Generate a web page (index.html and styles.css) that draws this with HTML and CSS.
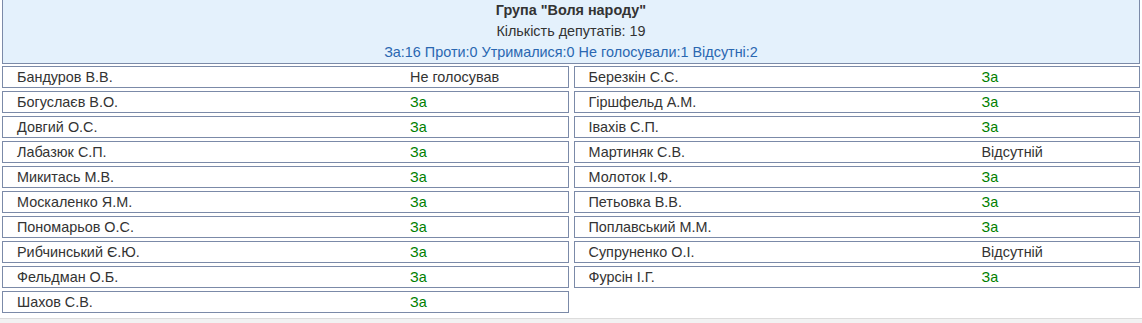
FILE: index.html
```html
<!DOCTYPE html>
<html lang="uk">
<head>
<meta charset="utf-8">
<title>Група "Воля народу"</title>
<link rel="stylesheet" href="styles.css">
</head>
<body>
<div class="page">
  <div class="group-head">
    <div class="title">Група "Воля народу"</div>
    <div class="count">Кількість депутатів: 19</div>
    <div class="summary">За:16 Проти:0 Утрималися:0 Не голосували:1 Відсутні:2</div>
  </div>
  <div class="grid">
    <div class="cell"><span class="name">Бандуров В.В.</span><span class="vote">Не голосував</span></div>
    <div class="cell"><span class="name">Березкін С.С.</span><span class="vote yes">За</span></div>
    <div class="cell"><span class="name">Богуслаєв В.О.</span><span class="vote yes">За</span></div>
    <div class="cell"><span class="name">Гіршфельд А.М.</span><span class="vote yes">За</span></div>
    <div class="cell"><span class="name">Довгий О.С.</span><span class="vote yes">За</span></div>
    <div class="cell"><span class="name">Івахів С.П.</span><span class="vote yes">За</span></div>
    <div class="cell"><span class="name">Лабазюк С.П.</span><span class="vote yes">За</span></div>
    <div class="cell"><span class="name">Мартиняк С.В.</span><span class="vote">Відсутній</span></div>
    <div class="cell"><span class="name">Микитась М.В.</span><span class="vote yes">За</span></div>
    <div class="cell"><span class="name">Молоток І.Ф.</span><span class="vote yes">За</span></div>
    <div class="cell"><span class="name">Москаленко Я.М.</span><span class="vote yes">За</span></div>
    <div class="cell"><span class="name">Петьовка В.В.</span><span class="vote yes">За</span></div>
    <div class="cell"><span class="name">Пономарьов О.С.</span><span class="vote yes">За</span></div>
    <div class="cell"><span class="name">Поплавський М.М.</span><span class="vote yes">За</span></div>
    <div class="cell"><span class="name">Рибчинський Є.Ю.</span><span class="vote yes">За</span></div>
    <div class="cell"><span class="name">Супруненко О.І.</span><span class="vote">Відсутній</span></div>
    <div class="cell"><span class="name">Фельдман О.Б.</span><span class="vote yes">За</span></div>
    <div class="cell"><span class="name">Фурсін І.Г.</span><span class="vote yes">За</span></div>
    <div class="cell"><span class="name">Шахов С.В.</span><span class="vote yes">За</span></div>
  </div>
  <div class="foot"></div>
</div>
</body>
</html>
```
FILE: styles.css
```css
html, body {
  margin: 0;
  padding: 0;
  background: #ffffff;
}
body {
  font-family: "Liberation Sans", Arial, sans-serif;
  font-size: 14.4px;
  color: #333333;
}
.page {
  margin: 0 2px;
}
.group-head {
  background: #e4f1fc;
  border: 1px solid #7b8aa8;
  border-top: none;
  text-align: center;
  line-height: 21px;
}
.title {
  font-weight: bold;
}
.summary {
  color: #2a67b1;
}
.grid {
  margin-top: 2px;
  display: grid;
  grid-template-columns: 1fr 1fr;
  column-gap: 5px;
  row-gap: 3px;
}
.cell {
  border: 1px solid #7b8aa8;
  height: 20px;
  line-height: 20px;
  display: grid;
  grid-template-columns: 393px 1fr;
  padding-left: 14px;
}
.vote.yes {
  color: #008000;
}
.foot {
  margin-top: 5px;
  height: 5px;
  border-top: 1px solid #dcdcdc;
  background: #f2f2f2;
  margin-left: -2px;
  margin-right: -2px;
}
```
